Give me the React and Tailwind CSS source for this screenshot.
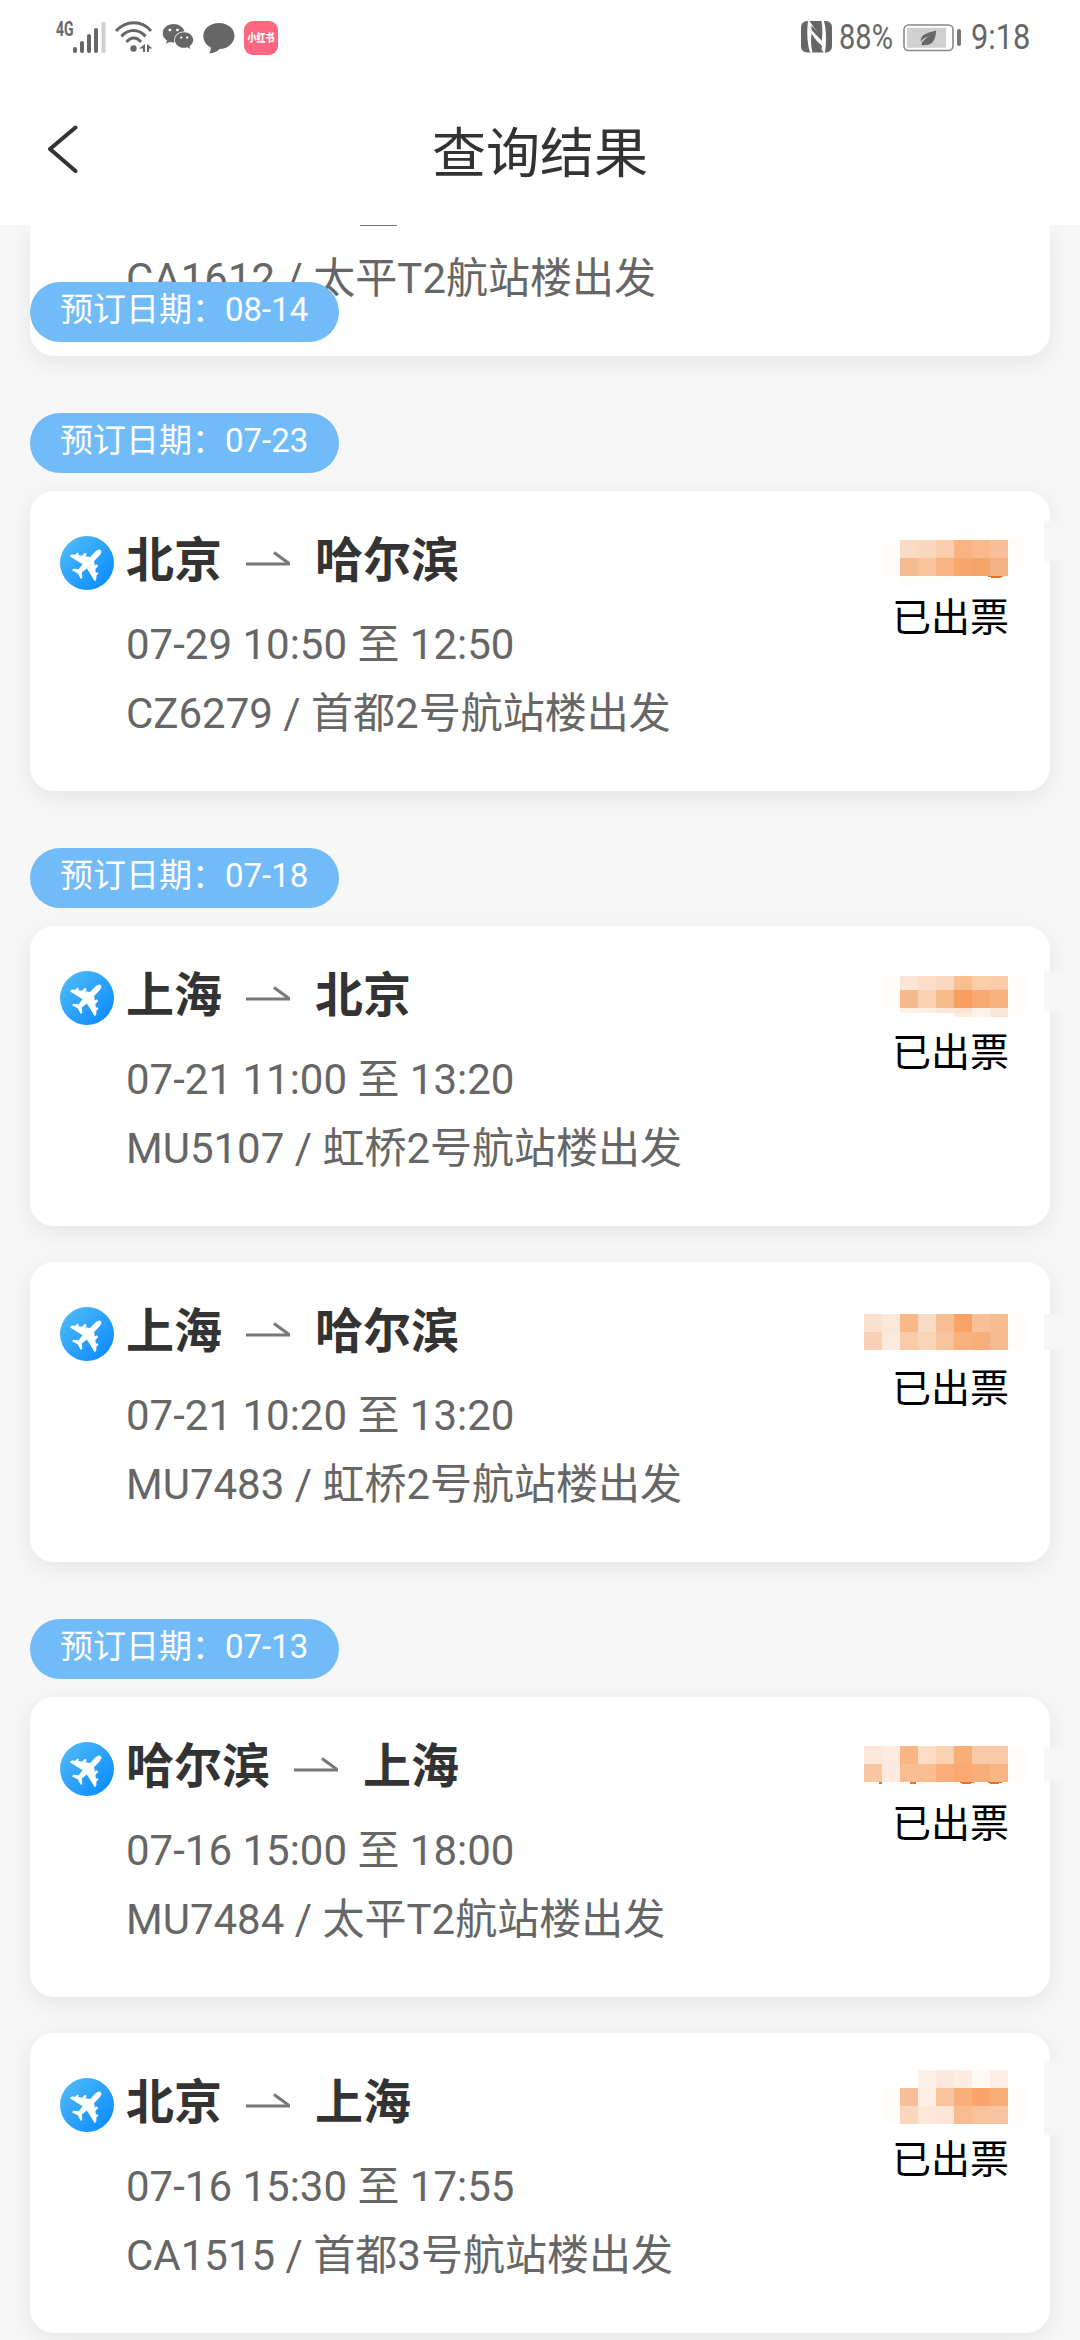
import { FaWeixin } from 'react-icons/fa';

const FONT = "font-[Roboto,'Noto_Sans_CJK_SC',sans-serif]";

// Each mosaic is drawn in a 300px wide box at the right edge of its card.
// rows: [y, height, first column x, colours], every cell is 18px wide
const GROUPS = [
  {
    date: '07-23',
    flights: [
      {
        from: '北京',
        to: '哈尔滨',
        time: '07-29 10:50 至 12:50',
        code: 'CZ6279',
        gate: '首都2号航站楼出发',
        mosaic: {
          rows: [
            [49, 18, 120, ['#f9dac4', '#fad8bf', '#fbcfae', '#f9b380', '#fab98c', '#f8bf98']],
            [67, 18, 120, ['#f3bc91', '#f8c49c', '#f8b583', '#f7a76a', '#f5a468', '#f3b286']],
          ],
          faint: 'M102 52h18v34h-18zM228 50l16-2v30h-16zM120 86h62l-62 11z',
          digits: 'M207 84l20-4q-3 8-12 7-7 0-8-3z',
          smudge: [30, 40],
        },
      },
    ],
  },
  {
    date: '07-18',
    flights: [
      {
        from: '上海',
        to: '北京',
        time: '07-21 11:00 至 13:20',
        code: 'MU5107',
        gate: '虹桥2号航站楼出发',
        mosaic: {
          rows: [
            [50, 14, 120, ['#fae5d6', '#fadcc7', '#f9d9c2', '#fabf91', '#fbcda9', '#fccba8']],
            [64, 18, 120, ['#f6b98d', '#fbd2b4', '#f7ba8b', '#f89e5f', '#f8a972', '#f8b27f']],
            [82, 5, 120, ['#fdf2e9', '#fdeee3', '#fce9db', '#fce5d4', '#fef1e9', '#fce6d8']],
            [87, 4, 174, ['#fdece0', '#fef2ea', '#fce6d8']],
          ],
          faint: 'M102 46l18 4v32h-18zM228 49h18v35l-18 4z',
          smudge: [45, 40],
        },
      },
      {
        from: '上海',
        to: '哈尔滨',
        time: '07-21 10:20 至 13:20',
        code: 'MU7483',
        gate: '虹桥2号航站楼出发',
        mosaic: {
          rows: [
            [52, 18, 84, ['#fae1ce', '#fae8da', '#fab889', '#f9dcc5', '#f7bf96', '#f8a469', '#fac199', '#f7bc90']],
            [70, 18, 84, ['#f8d0b3', '#fbeadd', '#facba9', '#f9d4b7', '#f7c39d', '#f9b17d', '#f8b07b', '#f7bb92']],
          ],
          faint: 'M228 52h18v34h-18z',
          smudge: [52, 36],
        },
      },
    ],
  },
  {
    date: '07-13',
    flights: [
      {
        from: '哈尔滨',
        to: '上海',
        time: '07-16 15:00 至 18:00',
        code: 'MU7484',
        gate: '太平T2航站楼出发',
        mosaic: {
          rows: [
            [49, 18, 84, ['#fde7d8', '#fdebe0', '#fab585', '#fcdcc4', '#fbd1b2', '#f9ae78', '#fac9a8', '#fac9a8']],
            [67, 18, 84, ['#f8c6a1', '#fdeade', '#fcbc91', '#fabd92', '#f8af7c', '#faaa70', '#f9ad79', '#f8b685']],
          ],
          faint: 'M228 50h18v34h-18z',
          digits: 'M99 84h3v3h-3zM130 85h6v2h-6zM179 85q8-3 16 0-4 2-8 2-5 0-8-2zM207 85q8-3 16 0-4 2-8 2-5 0-8-2z',
          smudge: [51, 33],
        },
      },
      {
        from: '北京',
        to: '上海',
        time: '07-16 15:30 至 17:55',
        code: 'CA1515',
        gate: '首都3号航站楼出发',
        mosaic: {
          rows: [
            [37, 18, 138, ['#fdf0e7', '#fce9de', '#fdece2', '#fef8f4', '#fdede4']],
            [55, 18, 120, ['#f7bf98', '#fdeee4', '#f8c29b', '#f9af7a', '#f9a569', '#f8ad78']],
            [73, 18, 120, ['#fad6bc', '#fce7d9', '#fce5d6', '#f9bb90', '#f9c29b', '#f8c39f']],
          ],
          faint: 'M102 55h18v35h-18zM228 55h18v35h-18z',
          smudge: [28, 74],
        },
      },
    ],
  },
];

function SignalIcon() {
  return (
    <svg width="33" height="31" viewBox="0 0 33 31" fill="#666">
      <rect x="0" y="25" width="4" height="6" rx="2" />
      <rect x="7" y="19" width="4" height="12" rx="2" />
      <rect x="14" y="12" width="4" height="19" rx="2" />
      <rect x="21" y="6" width="4" height="25" rx="2" />
      <rect x="28.500" y="0" width="4" height="31" rx="1.500" fill="#d0d0d0" />
    </svg>
  );
}

function WifiIcon() {
  return (
    <svg width="38" height="32" viewBox="0 0 38 32" fill="none" stroke="#666" strokeWidth="3">
      <path d="M1 10C11-1 27-1 36 10" />
      <path d="M6.500 15.500C13 7.500 24 7.500 30.500 15.500" />
      <path d="M11.500 21C15.500 15.500 22 15.500 26 21" />
      <circle cx="18.500" cy="27.500" r="3.200" fill="#666" stroke="none" />
      <path d="M30 23v8h-2v-3.500h-4zM32 23l5.500 4.500H34v3.500h-2z" fill="#666" stroke="none" />
    </svg>
  );
}

function BubbleIcon() {
  return (
    <svg width="32" height="31" viewBox="0 0 32 31" fill="#666">
      <path d="M16 0C24.800 0 31.500 5.600 31.500 12.800S24.800 26 16.500 26c-1.500 1.800-5.500 4.600-10.500 4.200 1.200-1.500 2-3.200 1.800-5.800C3.200 22.300.3 18 .3 12.800.3 5.600 7.200 0 16 0z" />
    </svg>
  );
}

function NfcIcon() {
  return (
    <svg width="31" height="32" viewBox="0 0 31 32">
      <rect width="31" height="31.500" rx="6" fill="#666" />
      <path d="M7 0C5.800 10 6 22 9 31.500h2.500C9.800 25 9.800 18 10.500 12.500L22.500 31.500h1.500C25.500 22 25.500 9 23 0h-2.500C21.500 6 21.600 12 21 18L8.500 0z" fill="#fff" />
      <path d="M10.500 4.500L21 16v4L10.500 9z" fill="#666" />
      <path d="M11 15l10 10-.5 3.500L12 18z" fill="#666" />
    </svg>
  );
}

function BatteryIcon() {
  return (
    <svg width="58" height="28" viewBox="0 0 58 28">
      <rect x="1" y="1" width="49" height="25.500" rx="4.500" fill="#fff" stroke="#888" strokeWidth="1.600" />
      <rect x="4" y="3.800" width="39" height="20" rx="1" fill="#d0d0d0" />
      <path d="M33 6.500c0 8.500-3 15-12 14.500L18.800 21.400l-.3-1.400c.8-2.500 3.500-5.500 8-8-5 1.300-7.500 3.500-8.700 6C17.500 9.500 24 9.500 33 6.500z" fill="#666" />
      <rect x="54" y="5" width="4" height="17" rx="2" fill="#777" />
    </svg>
  );
}

function StatusBar() {
  return (
    <div className="flex h-[76px] items-start pt-[21px] pl-14 text-[#666]">
      <span className="w-[17px] origin-left scale-x-[0.7] text-[20px] leading-[17px] font-bold">4G</span>
      <div className="pt-px"><SignalIcon /></div>
      <div className="ml-[9px]"><WifiIcon /></div>
      <FaWeixin className="ml-[9px] mt-[-1px] h-[33px] w-[32px]" />
      <div className="ml-[9px] pt-[2px]"><BubbleIcon /></div>
      <div className="ml-[9px] flex h-[34px] w-[34px] items-center justify-center rounded-[9px] bg-[#ff667f]">
        <span className="scale-y-125 text-[9px] leading-none font-black whitespace-nowrap text-white">小红书</span>
      </div>
      <div className="ml-auto"><NfcIcon /></div>
      <span className="ml-[7px] w-[56px] origin-left scale-x-[0.83] text-[35px] leading-[34px]">88%</span>
      <div className="ml-[8px] pt-[3px]"><BatteryIcon /></div>
      <span className="ml-[10px] w-[109px] origin-left scale-x-[0.88] text-[35px] leading-[34px]">9:18</span>
    </div>
  );
}

function PlaneIcon() {
  return (
    <svg className="shrink-0" width="54" height="54" viewBox="-27 -27 54 54">
      <defs>
        <linearGradient id="sky" x1="0" y1="0" x2="1" y2="1">
          <stop offset="0.100" stopColor="#4db9f8" />
          <stop offset="0.900" stopColor="#0c8cff" />
        </linearGradient>
      </defs>
      <circle r="27" fill="url(#sky)" />
      <path
        transform="translate(0.5 0.500) rotate(45) scale(0.9)"
        fill="#fff"
        d="M0-21c2 0 3.200 3 3.200 6.500v7.300l4.300 3.200v-1.500c0-1.800 3-1.800 3 0v3.700l3.700 2.700V0c0-1.500 2.400-1.500 2.400 0v2.700l2 1.900c1 .9 1.200 2.300 1 3.600L3.400 4.400 2.500 11.500l4 3.200c.6.600.7 1.700.5 2.800L0 15.500l-7 2c-.2-1.100-.1-2.200.5-2.800l4-3.200-.9-7.100L-19.600 8.200c-.2-1.300 0-2.700 1-3.600l2-1.900V0c0-1.500 2.400-1.500 2.400 0v.900l3.700-2.700v-3.700c0-1.800 3-1.800 3 0v1.500l4.300-3.200v-7.300C-3.200-18-2-21 0-21z"
      />
    </svg>
  );
}

function Arrow() {
  return (
    <svg className="mx-6 mb-[5px]" width="45" height="15" viewBox="0 0 45 15" fill="none" stroke="#777" strokeWidth="3">
      <path d="M0 13H44" />
      <path d="M28 1.500L43 12.500" />
    </svg>
  );
}

function PriceMosaic({ rows, faint, digits, smudge }) {
  const [top, height] = smudge;
  return (
    <svg className="absolute top-0 left-[750px]" width="300" height="110" viewBox="0 0 300 110" shapeRendering="crispEdges">
      <rect x="264" y={top} width="20" height={height} fill="#f6f6f6" />
      <path d={faint} fill="#fffcf9" />
      {digits && <path d={digits} fill="#e27428" />}
      {rows.map(([y, h, x, colors]) =>
        colors.map((color, i) => (
          <rect key={`${y}-${i}`} x={x + i * 18} y={y} width="18" height={h} fill={color} />
        ))
      )}
    </svg>
  );
}

function DateTag({ date }) {
  return (
    <div className="h-[60px] w-[309px] rounded-full bg-[#72bbf9] pl-[30px] text-[33px] leading-[56px] whitespace-nowrap text-white">
      预订日期：{date}
    </div>
  );
}

function FlightCard({ flight }) {
  return (
    <div className="relative h-[300px] rounded-[24px] bg-white pt-[34px] pr-[41px] pl-[30px] shadow-[0_6px_24px_rgba(0,0,0,0.08)]">
      <div className="flex items-start justify-between">
        <div>
          <div className="flex h-[72px] items-center text-[48px] leading-[72px] font-bold text-[#333]">
            <div className="mt-[4px] mr-3"><PlaneIcon /></div>
            <span>{flight.from}</span>
            <Arrow />
            <span>{flight.to}</span>
          </div>
          <div className="mt-[13px] pl-[66px] text-[42px] leading-[69px] text-[#666]">
            <p>{flight.time}</p>
            <p>{flight.code} / {flight.gate}</p>
          </div>
        </div>
        <span className="mt-[64px] text-[39px] leading-[58px] text-black">已出票</span>
      </div>
      <PriceMosaic {...flight.mosaic} />
    </div>
  );
}

export default function App() {
  return (
    <div className={`${FONT} flex h-[2340px] w-[1080px] flex-col overflow-hidden bg-[#f7f7f7]`}>
      <header className="z-10 h-[225px] shrink-0 bg-white">
        <StatusBar />
        <div className="grid h-[149px] grid-cols-[200px_1fr_200px] items-start">
          <svg className="mt-[49px] ml-[47px]" width="32" height="48" viewBox="0 0 32 48" fill="none" stroke="#333" strokeWidth="4" strokeLinecap="round" strokeLinejoin="round">
            <path d="M28.500 2.500L3 24l25.500 22" />
          </svg>
          <h1 className="mt-[39px] text-center text-[54px] leading-[80px] text-[#333]">查询结果</h1>
        </div>
      </header>

      <main className="px-[30px]">
        {/* tail of the card that is scrolled under the header */}
        <div className="relative h-[131px] rounded-b-[24px] bg-white pl-24 shadow-[0_6px_24px_rgba(0,0,0,0.08)]">
          <div className="ml-[234px] h-px w-[37px] bg-[#777]" />
          <p className="pt-[18px] text-[42px] leading-[69px] text-[#666]">CA1612 / 太平T2航站楼出发</p>
          <div className="absolute top-[57px] left-0">
            <DateTag date="08-14" />
          </div>
        </div>

        {GROUPS.map((group) => (
          <section key={group.date} className="pt-[57px]">
            <DateTag date={group.date} />
            <div className="mt-[18px] flex flex-col gap-9">
              {group.flights.map((flight) => (
                <FlightCard key={flight.code} flight={flight} />
              ))}
            </div>
          </section>
        ))}
      </main>
    </div>
  );
}
